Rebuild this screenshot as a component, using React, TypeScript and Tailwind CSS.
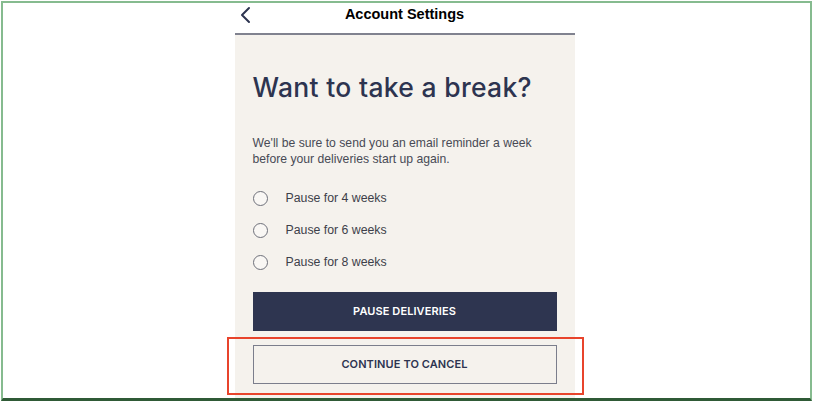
import React from "react";

const options = ["Pause for 4 weeks", "Pause for 6 weeks", "Pause for 8 weeks"];

export default function App() {
  return (
    <div className="w-[814px] h-[402px] bg-white pl-px pt-px overflow-hidden">
      {/* framed screenshot */}
      <div className="relative w-[811px] h-[400px] border-2 border-[#86bb8f] border-b-[3px] border-b-[#2f5a36] bg-white flex flex-col items-center pr-[4px]">
        {/* header */}
        <div className="relative w-[340px] h-[30px] flex items-center justify-center shrink-0">
          <svg
            className="absolute left-[3px] top-[3px]"
            width="14"
            height="18"
            viewBox="0 0 14 18"
            fill="none"
            stroke="#2d3450"
            strokeWidth="2"
            strokeLinecap="round"
            strokeLinejoin="round"
          >
            <path d="M11 2 L4 9 L11 16" />
          </svg>
          <span className="font-['Liberation_Sans',Arial,sans-serif] font-bold text-[14.5px] text-black leading-none -mt-[7px]">
            Account Settings
          </span>
        </div>
        <div className="w-[340px] h-[2px] bg-[#80828f] shrink-0" />

        {/* panel */}
        <div className="w-[340px] flex-1 bg-[#f5f2ed] px-[18px] pt-[36px] flex flex-col">
          <h1 className="font-['Inter',sans-serif] font-medium text-[26.5px] leading-[32px] text-[#2d3450] tracking-[0.3px]">
            Want to take a break?
          </h1>
          <p className="mt-[32px] font-['Liberation_Sans',Arial,sans-serif] text-[12.2px] leading-[16px] text-[#484a55]">
            We'll be sure to send you an email reminder a week
            <br />
            before your deliveries start up again.
          </p>
          <div className="mt-[15px] flex flex-col">
            {options.map((label) => (
              <label key={label} className="h-[32px] flex items-center gap-[18px]">
                <span className="w-[15px] h-[15px] rounded-full border-[1.5px] border-[#6e707a] bg-white/40 shrink-0" />
                <span className="font-['Liberation_Sans',Arial,sans-serif] text-[12.3px] text-[#3d3f4a]">
                  {label}
                </span>
              </label>
            ))}
          </div>
          <button className="mt-[14px] h-[39px] w-full bg-[#2e3550] text-white font-['Inter',sans-serif] font-semibold text-[11px] tracking-[0.1px]">
            PAUSE DELIVERIES
          </button>
          <button className="mt-[14px] h-[39px] w-full border-[1.5px] border-[#7b7e8c] bg-[#f5f2ed] text-[#2d3450] font-['Inter',sans-serif] font-semibold text-[11px] tracking-[0.1px]">
            CONTINUE TO CANCEL
          </button>
          <div className="h-[8px]" />
        </div>

        {/* annotation highlight */}
        <div className="absolute left-[224px] top-[334px] w-[357px] h-[58px] border-2 border-[#e8442c] pointer-events-none" />
      </div>
    </div>
  );
}
